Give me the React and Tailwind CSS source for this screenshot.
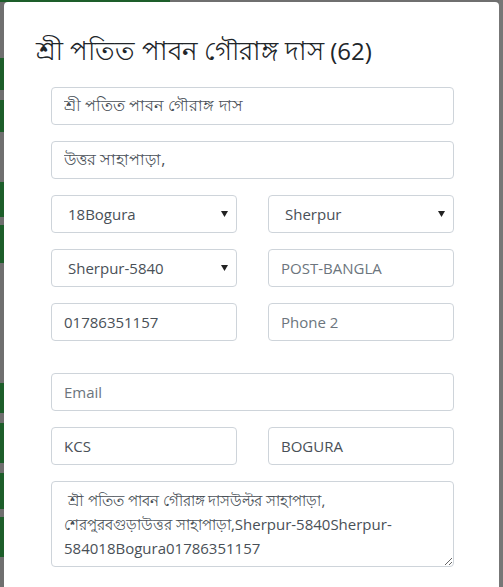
import React from 'react';

const font = { fontFamily: '"Open Sans", "Noto Sans", sans-serif' };

const Caret = () => (
  <svg className="pointer-events-none absolute right-[9px] top-1/2 -translate-y-1/2" width="7" height="6" viewBox="0 0 7 6">
    <path d="M0 0h7L3.5 6z" fill="#222" />
  </svg>
);

const Select = ({ value }) => (
  <div className="relative min-w-0">
    <select
      defaultValue={value}
      className="h-[38px] w-full appearance-none rounded border border-[#ced4da] bg-white pl-4 pr-6 text-[15px] text-[#495057] outline-none"
    >
      <option>{value}</option>
    </select>
    <Caret />
  </div>
);

const Input = ({ value, placeholder, className = '' }) => (
  <input
    type="text"
    defaultValue={value}
    placeholder={placeholder}
    className={`h-[38px] w-full min-w-0 rounded border border-[#ced4da] bg-white px-3 text-[15px] text-[#495057] outline-none placeholder:text-[#6c757d] ${className}`}
  />
);

const Row = ({ children }) => <div className="grid grid-cols-2 gap-x-[31px]">{children}</div>;

export default function App() {
  return (
    <div className="relative h-[587px] w-[503px] overflow-hidden bg-[#6f6f6f]" style={font}>
      <div className="absolute left-0 top-0 flex h-full w-[4px] flex-col">
        <div className="h-[58px]" />
        <div className="h-[32px] bg-[#1d5e2a]" />
        <div className="h-[10px]" />
        <div className="h-[32px] bg-[#1d5e2a]" />
        <div className="h-[50px]" />
        <div className="h-[35px] bg-[#1d5e2a]" />
        <div className="h-[8px]" />
        <div className="h-[38px] bg-[#1d5e2a]" />
        <div className="h-[120px]" />
        <div className="h-[30px] bg-[#1d5e2a]" />
        <div className="h-[10px]" />
        <div className="h-[40px] bg-[#1d5e2a]" />
        <div className="h-[10px]" />
        <div className="h-[36px] bg-[#1d5e2a]" />
        <div className="h-[8px]" />
        <div className="h-[40px] bg-[#1d5e2a]" />
      </div>
      <div className="absolute left-0 top-0 h-[2px] w-[170px] bg-[#1d5e2a]" />
      <div className="absolute left-[4px] top-[2px] h-[620px] w-[495px] rounded-[4px] bg-white">
        <h1 className="pl-[32px] pt-[30px] text-[24px] font-medium leading-[36px] text-[#212529]">
          <span className="text-[26px] font-normal">শ্রী পতিত পাবন গৌরাঙ্গ দাস</span> (62)
        </h1>
        <div className="ml-[47px] mt-[18px] flex w-[403px] flex-col gap-[16px]">
          <Input value="শ্রী পতিত পাবন গৌরাঙ্গ দাস" className="text-[16px]" />
          <Input value="উত্তর সাহাপাড়া," className="text-[16px]" />
          <Row>
            <Select value="18Bogura" />
            <Select value="Sherpur" />
          </Row>
          <Row>
            <Select value="Sherpur-5840" />
            <Input placeholder="POST-BANGLA" />
          </Row>
          <Row>
            <Input value="01786351157" />
            <Input placeholder="Phone 2" />
          </Row>
          <Input placeholder="Email" className="mt-[16px]" />
          <Row>
            <Input value="KCS" />
            <Input value="BOGURA" />
          </Row>
          <textarea
            defaultValue={' শ্রী পতিত পাবন গৌরাঙ্গ দাসউল্টর সাহাপাড়া,\nশেরপুরবগুড়াউত্তর সাহাপাড়া,Sherpur-5840Sherpur-584018Bogura01786351157'}
            className="h-[86px] rounded border border-[#ced4da] bg-white px-3 py-[6px] text-[15px] leading-[24px] text-[#495057] outline-none"
          />
        </div>
      </div>
      <div className="absolute right-0 top-0 h-full w-[4px] bg-[#777]" />
    </div>
  );
}
